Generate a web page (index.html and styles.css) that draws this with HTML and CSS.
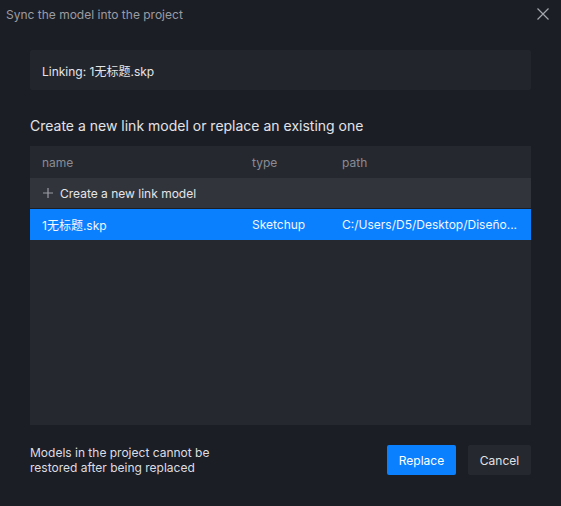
FILE: index.html
```html
<!DOCTYPE html>
<html>
<head>
<meta charset="utf-8">
<link rel="stylesheet" href="styles.css">
</head>
<body>
<div class="dialog">
  <div class="titlebar">
    <span class="title">Sync the model into the project</span>
    <svg class="close" width="12" height="12" viewBox="0 0 12 12"><path d="M0.5 0.5L11.5 11.5M11.5 0.5L0.5 11.5" stroke="#a4a6ad" stroke-width="1.2" fill="none"/></svg>
  </div>
  <div class="content">
    <div class="linking">Linking: 1无标题.skp</div>
    <div class="heading">Create a new link model or replace an existing one</div>
    <div class="table">
      <div class="row head">
        <span class="c-name">name</span><span class="c-type">type</span><span class="c-path">path</span>
      </div>
      <div class="row create">
        <svg class="plus" width="10" height="10" viewBox="0 0 10 10"><path d="M5 0V10M0 5H10" stroke="#9a9ca3" stroke-width="1.2"/></svg>
        <span>Create a new link model</span>
      </div>
      <div class="row selected">
        <span class="c-name">1无标题.skp</span><span class="c-type">Sketchup</span><span class="c-path">C:/Users/D5/Desktop/Diseño...</span>
      </div>
    </div>
    <div class="footer">
      <div class="warn">Models in the project cannot be<br>restored after being replaced</div>
      <div class="buttons">
        <button class="btn primary">Replace</button>
        <button class="btn secondary">Cancel</button>
      </div>
    </div>
  </div>
</div>
</body>
</html>
```
FILE: styles.css
```css
* { box-sizing: border-box; }
html, body { margin: 0; padding: 0; }
body {
  background: #1c1e26;
  font-family: Inter, "Noto Sans CJK SC", sans-serif;
  width: 561px;
  height: 506px;
  overflow: hidden;
}
.dialog { width: 561px; height: 506px; }
.titlebar {
  height: 28px;
  display: flex;
  align-items: center;
  justify-content: space-between;
  padding: 0 12px 0 6px;
}
.title { font-size: 12px; color: #9a9ca3; }
.content { padding: 22px 30px 0 30px; }
.linking {
  height: 40px;
  background: #23252d;
  border-radius: 2px;
  display: flex;
  align-items: center;
  padding-left: 12px;
  font-size: 12px;
  color: #e4e5e8;
}
.heading {
  margin-top: 26px;
  font-size: 14px;
  color: #e2e3e6;
  height: 20px;
  line-height: 20px;
}
.table {
  margin-top: 10px;
  height: 279px;
  background: #262830;
  font-size: 12px;
}
.row {
  display: flex;
  align-items: center;
  padding-left: 12px;
}
.row.head { height: 32px; color: #8a8c93; }
.row.create {
  height: 31px;
  background: #32343c;
  color: #e4e5e8;
  gap: 7px;
  border-bottom: 1px solid #1c1e26;
}
.plus { margin-left: 1px; }
.row.selected {
  height: 31px;
  background: #0a80ff;
  color: #f2f6ff;
}
.c-name { width: 210px; }
.c-type { width: 90px; }
.c-path { white-space: nowrap; }
.footer {
  margin-top: 20px;
  display: flex;
  justify-content: space-between;
  align-items: flex-start;
}
.warn {
  font-size: 12px;
  line-height: 15px;
  color: #dcdde0;
}
.buttons { display: flex; gap: 12px; }
.btn {
  height: 30px;
  border: none;
  border-radius: 2px;
  font-family: Inter, sans-serif;
  font-size: 12px;
  padding: 0;
}
.btn.primary { width: 69px; background: #0a80ff; color: #fff; }
.btn.secondary { width: 63px; background: #262830; color: #e0e1e4; }
```
